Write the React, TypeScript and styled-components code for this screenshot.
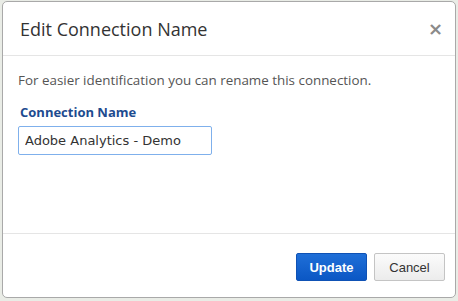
import styled, { createGlobalStyle } from "styled-components";

const GlobalStyle = createGlobalStyle`
  html, body {
    margin: 0;
    padding: 0;
    background: #e9ece6;
  }
`;

const Page = styled.div`
  width: 458px;
  height: 301px;
  padding: 1px 2px 3px 2px;
  box-sizing: border-box;
`;

const Modal = styled.div`
  height: 100%;
  display: flex;
  flex-direction: column;
  background: #fff;
  border: 1px solid #a9a9a9;
  border-radius: 5px;
  box-sizing: border-box;
  font-family: "Open Sans", sans-serif;
`;

const Header = styled.div`
  display: flex;
  align-items: center;
  justify-content: space-between;
  height: 53px;
  padding: 0 12px 0 17px;
  border-bottom: 1px solid #e5e5e5;
`;

const Title = styled.h3`
  margin: 0;
  font-size: 18px;
  font-weight: 400;
  color: #333;
`;

const Close = styled.button`
  border: 0;
  background: none;
  padding: 0;
  color: #8a8a8a;
  font-size: 18px;
  font-weight: 700;
  line-height: 1;
  font-family: "DejaVu Sans", sans-serif;
  cursor: pointer;
`;

const Body = styled.div`
  flex: 1;
  padding: 15px 15px;
  border-bottom: 1px solid #e5e5e5;
`;

const Intro = styled.p`
  margin: 0 0 14px;
  font-size: 13.4px;
  color: #555;
`;

const Label = styled.label`
  display: block;
  margin-bottom: 5px;
  padding-left: 2px;
  font-size: 13px;
  font-weight: 700;
  color: #1d4b8f;
`;

const Input = styled.input`
  width: 194px;
  height: 29px;
  box-sizing: border-box;
  padding: 0 6px;
  border: 1px solid #7fb0ec;
  border-radius: 2px;
  outline: none;
  font-family: "DejaVu Sans", Verdana, sans-serif;
  font-size: 13px;
  color: #333;
`;

const Footer = styled.div`
  display: flex;
  justify-content: flex-end;
  gap: 7px;
  height: 63px;
  padding: 19px 10px 0 0;
  box-sizing: border-box;
`;

const Button = styled.button<{ $primary?: boolean }>`
  min-width: 71px;
  height: 28px;
  padding: 0 12px;
  border-radius: 2px;
  font-family: "Liberation Sans", Arial, sans-serif;
  font-size: 13px;
  font-weight: ${(p) => (p.$primary ? 700 : 400)};
  color: ${(p) => (p.$primary ? "#fff" : "#333")};
  border: 1px solid ${(p) => (p.$primary ? "#0f52b5" : "#c4c4c4")};
  background: ${(p) =>
    p.$primary
      ? "linear-gradient(#1f6fd8, #0b57c4)"
      : "linear-gradient(#fbfbfb, #ececec)"};
  cursor: pointer;
`;

export default function App() {
  return (
    <>
      <GlobalStyle />
      <Page>
        <Modal>
          <Header>
            <Title>Edit Connection Name</Title>
            <Close aria-label="Close">×</Close>
          </Header>
          <Body>
            <Intro>For easier identification you can rename this connection.</Intro>
            <Label htmlFor="conn-name">Connection Name</Label>
            <Input id="conn-name" defaultValue="Adobe Analytics - Demo" />
          </Body>
          <Footer>
            <Button $primary>Update</Button>
            <Button>Cancel</Button>
          </Footer>
        </Modal>
      </Page>
    </>
  );
}
